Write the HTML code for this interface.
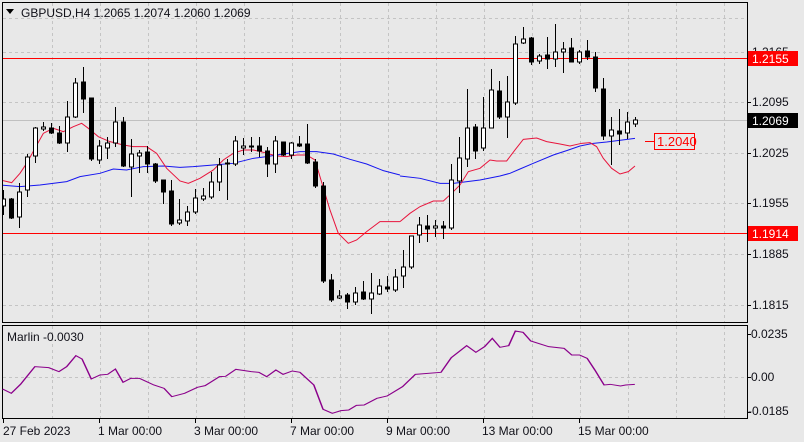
<!DOCTYPE html>
<html><head><meta charset="utf-8"><style>
html,body{margin:0;padding:0;background:#e8e8e8;}
svg{display:block;font-family:"Liberation Sans",sans-serif;}
.w{fill:#fff;stroke:#000;stroke-width:1}
.b{fill:#000;stroke:#000;stroke-width:1}
.k{stroke:#000;stroke-width:1;fill:none}
.g{stroke:#c4c4c4;stroke-width:1;stroke-dasharray:3,3}
text{font-size:12px;fill:#101018}
</style></head><body>
<svg width="804" height="442" viewBox="0 0 804 442" xmlns="http://www.w3.org/2000/svg">
<rect width="804" height="442" fill="#e8e8e8"/>
<defs><clipPath id="cp"><rect x="3" y="3" width="744" height="320"/></clipPath></defs>
<g class="g">
<path d="M52.5 3V323M100.5 3V323M148.5 3V323M196.5 3V323M244.5 3V323M292.5 3V323M340.5 3V323M388.5 3V323M436.5 3V323M484.5 3V323M532.5 3V323M580.5 3V323M628.5 3V323M676.5 3V323M724.5 3V323"/>
<path d="M3 52.5H747M3 102.5H747M3 153.5H747M3 203.5H747M3 254.5H747M3 305.5H747M3 18.5H747"/>
<path d="M52.5 326V418M100.5 326V418M148.5 326V418M196.5 326V418M244.5 326V418M292.5 326V418M340.5 326V418M388.5 326V418M436.5 326V418M484.5 326V418M532.5 326V418M580.5 326V418M628.5 326V418M676.5 326V418M724.5 326V418M3 377.5H747"/>
</g>
<line x1="3" y1="120.5" x2="747" y2="120.5" stroke="#c0c0c0"/>
<line x1="3" y1="58.5" x2="747" y2="58.5" stroke="#f00"/>
<line x1="3" y1="233.5" x2="747" y2="233.5" stroke="#f00"/>
<g clip-path="url(#cp)">
<g fill="none">
<path transform="scale(0.3333)" stroke="#1515f0" stroke-width="3" d="M0 555L60 560L120 555L200 545L240 530L300 520L340 507L380 510L430 500L490 498L540 502L580 500L640 495L700 490L760 475L800 470L850 462L900 455L950 455L1000 462L1050 478L1100 492L1150 512L1200 525"/>
<path transform="translate(400,0) scale(0.3333)" stroke="#1515f0" stroke-width="3" d="M0 528L60 535L120 550L160 550L240 540L300 528L330 520L360 507L400 490L460 465L500 452L540 438L580 430L620 426L705 415"/>
<path transform="scale(0.3333)" stroke="#e8143c" stroke-width="3" d="M0 540L35 548L60 520L80 490L105 445L130 400L160 385L190 395L220 380L245 370L265 385L295 410L330 425L370 435L400 440L440 440L470 460L500 505L540 543L565 550L600 535L640 510L670 480L700 460L730 450L760 450L790 457L830 468L860 470L890 465L920 465L945 480L960 530L975 580L990 630L1015 700L1045 730L1070 720L1100 695L1140 665L1200 665"/>
<path transform="translate(400,0) scale(0.3333)" stroke="#e8143c" stroke-width="3" d="M0 665L30 640L60 620L100 603L130 603L155 580L180 555L205 515L240 505L270 480L290 483L320 483L345 450L370 418L410 414L440 425L480 432L510 438L545 430L570 428L590 440L610 475L635 505L660 522L685 515L705 498"/>
</g>
<path class="k" d="M3.5 190V215M11.5 198V219M19.5 183V228M27.5 154V197M35.5 127V163M43.5 122V131M51.5 123V134M59.5 126V144M67.5 101V152M75.5 78V118M83.5 67V113M91.5 98V161M99.5 140V164M107.5 137V159M115.5 107V147M123.5 117V167M131.5 139V197M139.5 150V173M147.5 146V173M155.5 163V183M163.5 180V204M171.5 180V226M179.5 199V225M187.5 206V226M195.5 189V214M203.5 188V201M211.5 172V199M219.5 158V191M227.5 159V200M235.5 136V166M243.5 138V155M251.5 137V152M259.5 137V157M267.5 147V177M275.5 136V173M283.5 142V156M291.5 142V159M299.5 136V147M307.5 124V164M315.5 159V188M323.5 182V283M331.5 274V302M339.5 290V299M347.5 293V309M355.5 287V305M363.5 281V300M371.5 273V314M379.5 279V295M387.5 276V292M395.5 269V292M403.5 250V288M411.5 236V269M419.5 217V243M427.5 215V242M435.5 220V237M443.5 221V239M451.5 164V230M459.5 137V193M467.5 89V167M475.5 124V159M483.5 97V151M491.5 69V128M499.5 81V119M507.5 76V138M515.5 36V105M523.5 27V44M531.5 37V65M539.5 54V64M547.5 37V69M555.5 24V67M563.5 42V73M571.5 38V62M579.5 50V64M587.5 40V60M595.5 52V92M603.5 78V140M611.5 117V165M619.5 109V145M627.5 112V139M635.5 117V127"/>
<g class="w">
<rect x="1.5" y="199" width="4" height="7"/>
<rect x="17.5" y="192" width="4" height="25"/>
<rect x="25.5" y="157" width="4" height="33"/>
<rect x="33.5" y="128" width="4" height="28"/>
<rect x="41.5" y="127" width="4" height="2"/>
<rect x="65.5" y="117" width="4" height="26"/>
<rect x="73.5" y="83" width="4" height="34"/>
<rect x="97.5" y="146" width="4" height="14"/>
<rect x="105.5" y="143" width="4" height="5"/>
<rect x="113.5" y="122" width="4" height="21"/>
<rect x="129.5" y="154" width="4" height="13"/>
<rect x="137.5" y="153" width="4" height="3"/>
<rect x="177.5" y="220" width="4" height="3"/>
<rect x="185.5" y="212" width="4" height="9"/>
<rect x="193.5" y="198" width="4" height="14"/>
<rect x="201.5" y="196" width="4" height="3"/>
<rect x="209.5" y="182" width="4" height="15"/>
<rect x="217.5" y="165" width="4" height="17"/>
<rect x="225.5" y="163" width="4" height="1"/>
<rect x="233.5" y="141" width="4" height="23"/>
<rect x="241.5" y="146" width="4" height="2"/>
<rect x="273.5" y="141" width="4" height="23"/>
<rect x="289.5" y="143" width="4" height="12"/>
<rect x="337.5" y="296" width="4" height="2"/>
<rect x="353.5" y="293" width="4" height="9"/>
<rect x="369.5" y="293" width="4" height="6"/>
<rect x="377.5" y="286" width="4" height="8"/>
<rect x="393.5" y="277" width="4" height="13"/>
<rect x="401.5" y="267" width="4" height="9"/>
<rect x="409.5" y="236" width="4" height="31"/>
<rect x="417.5" y="225" width="4" height="10"/>
<rect x="433.5" y="226" width="4" height="2"/>
<rect x="449.5" y="180" width="4" height="48"/>
<rect x="457.5" y="158" width="4" height="23"/>
<rect x="465.5" y="128" width="4" height="31"/>
<rect x="481.5" y="128" width="4" height="20"/>
<rect x="489.5" y="90" width="4" height="38"/>
<rect x="505.5" y="102" width="4" height="15"/>
<rect x="513.5" y="44" width="4" height="59"/>
<rect x="521.5" y="39" width="4" height="4"/>
<rect x="537.5" y="56" width="4" height="5"/>
<rect x="553.5" y="52" width="4" height="7"/>
<rect x="561.5" y="49" width="4" height="3"/>
<rect x="577.5" y="52" width="4" height="10"/>
<rect x="609.5" y="130" width="4" height="6"/>
<rect x="625.5" y="122" width="4" height="11"/>
<rect x="633.5" y="120" width="4" height="4"/>
</g>
<g class="b">
<rect x="9.5" y="199" width="4" height="19"/>
<rect x="49.5" y="128" width="4" height="5"/>
<rect x="57.5" y="133" width="4" height="10"/>
<rect x="81.5" y="82" width="4" height="17"/>
<rect x="89.5" y="98" width="4" height="61"/>
<rect x="121.5" y="122" width="4" height="44"/>
<rect x="145.5" y="152" width="4" height="12"/>
<rect x="153.5" y="164" width="4" height="17"/>
<rect x="161.5" y="180" width="4" height="12"/>
<rect x="169.5" y="191" width="4" height="33"/>
<rect x="249.5" y="146" width="4" height="1"/>
<rect x="257.5" y="146" width="4" height="5"/>
<rect x="265.5" y="151" width="4" height="13"/>
<rect x="281.5" y="142" width="4" height="13"/>
<rect x="297.5" y="144" width="4" height="2"/>
<rect x="305.5" y="144" width="4" height="19"/>
<rect x="313.5" y="162" width="4" height="24"/>
<rect x="321.5" y="186" width="4" height="95"/>
<rect x="329.5" y="280" width="4" height="20"/>
<rect x="345.5" y="295" width="4" height="7"/>
<rect x="361.5" y="292" width="4" height="7"/>
<rect x="385.5" y="287" width="4" height="2"/>
<rect x="425.5" y="226" width="4" height="3"/>
<rect x="441.5" y="226" width="4" height="2"/>
<rect x="473.5" y="127" width="4" height="24"/>
<rect x="497.5" y="91" width="4" height="26"/>
<rect x="529.5" y="38" width="4" height="24"/>
<rect x="545.5" y="55" width="4" height="4"/>
<rect x="569.5" y="48" width="4" height="14"/>
<rect x="585.5" y="51" width="4" height="6"/>
<rect x="593.5" y="57" width="4" height="31"/>
<rect x="601.5" y="89" width="4" height="47"/>
<rect x="617.5" y="131" width="4" height="3"/>
</g>
</g>
<line x1="645" y1="141.5" x2="654" y2="141.5" stroke="#f00"/>
<rect x="654.5" y="133.5" width="40" height="16" fill="#e8e8e8" stroke="#f00"/>
<text x="657" y="146" style="fill:#f00;font-size:13px">1.2040</text>
<rect x="2.5" y="2.5" width="745" height="320" fill="none" stroke="#000"/>
<rect x="2.5" y="325.5" width="745" height="93" fill="none" stroke="#000"/>
<path d="M6 9H14L10 14Z" fill="#000"/>
<text x="21" y="17">GBPUSD,H4  1.2065 1.2074 1.2060 1.2069</text>
<text x="7" y="341">Marlin -0.0030</text>
<path class="k" d="M747 52.5H751M747 102.5H751M747 153.5H751M747 203.5H751M747 254.5H751M747 305.5H751M747 334.5H751M747 377.5H751M747 412.5H751"/>
<text x="752" y="56">1.2165</text>
<text x="752" y="106">1.2095</text>
<text x="752" y="157">1.2025</text>
<text x="752" y="207">1.1955</text>
<text x="752" y="258">1.1885</text>
<text x="752" y="309">1.1815</text>
<rect x="748" y="51" width="50" height="15" fill="#f00"/>
<text x="752" y="63" style="fill:#fff">1.2155</text>
<rect x="748" y="113" width="50" height="15" fill="#000"/>
<text x="752" y="125" style="fill:#fff">1.2069</text>
<rect x="748" y="226" width="50" height="15" fill="#f00"/>
<text x="752" y="238" style="fill:#fff">1.1914</text>
<text x="751" y="338">0.0235</text>
<text x="751" y="381">0.00</text>
<text x="748" y="415">-0.0185</text>
<path transform="translate(0,315) scale(0.5128,0.3333)" fill="none" stroke="#8b008b" stroke-width="3" d="M5 222L22 235L40 208L68 155L95 158L115 170L130 155L148 122L160 132L178 192L195 180L210 178L225 162L240 202L255 190L272 190L300 210L320 220L335 245L360 235L385 217L400 212L428 185L440 184L460 163L490 170L505 172L520 185L538 165L552 178L570 168L585 172L612 210L630 283L648 295L665 287L680 285L695 271L710 270L735 250L755 243L785 215L810 178L860 172L880 128L910 92L928 112L945 95L960 70L975 97L992 92L1005 48L1020 52L1035 78L1070 95L1100 100L1115 120L1130 120L1145 130L1160 165L1178 210L1190 208L1210 213L1220 210L1238 208"/>
<path class="k" d="M3.5 419V423M99.5 419V423M195.5 419V423M291.5 419V423M387.5 419V423M483.5 419V423M579.5 419V423"/>
<text x="3" y="435">27 Feb 2023</text>
<text x="98" y="435">1 Mar 00:00</text>
<text x="194" y="435">3 Mar 00:00</text>
<text x="290" y="435">7 Mar 00:00</text>
<text x="386" y="435">9 Mar 00:00</text>
<text x="482" y="435">13 Mar 00:00</text>
<text x="578" y="435">15 Mar 00:00</text>
</svg>
</body></html>
